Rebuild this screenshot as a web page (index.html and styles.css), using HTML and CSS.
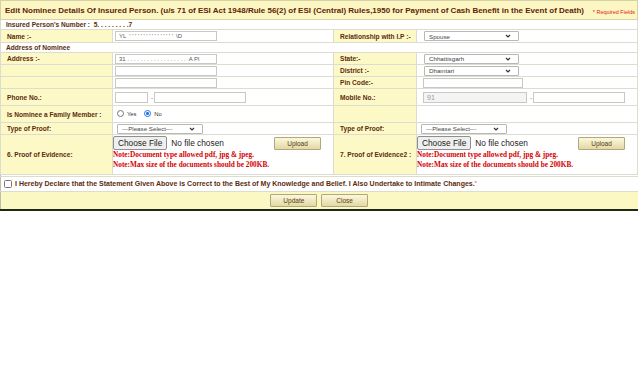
FILE: index.html
```html
<!DOCTYPE html>
<html lang="en">
<head>
    <meta charset="UTF-8">
    <title>Edit Nominee Details</title>
    <link rel="stylesheet" href="styles.css">
</head>
<body>
    <table class="form-table">
        <colgroup>
            <col class="c-lbl1">
            <col class="c-fld1">
            <col class="c-lbl2">
            <col class="c-fld2">
        </colgroup>
        <tr class="head">
            <td colspan="4">
                <div class="head-in">
                    <span class="title">Edit Nominee Details Of Insured Person. (u/s 71 of ESI Act 1948/Rule 56(2) of ESI (Central) Rules,1950 for Payment of Cash Benefit in the Event of Death)</span>
                    <span class="req">* Required Fields</span>
                </div>
            </td>
        </tr>
        <tr class="plain">
            <td colspan="4">Insured Person's Number : &nbsp;5. . . . . . . . .7</td>
        </tr>
        <tr class="name-row">
            <td class="lbl">Name :-</td>
            <td><input class="txt" type="text" value="YL  ' ' ' ' ' ' ' ' ' ' ' ' ' ' ' '  \D"></td>
            <td class="lbl">Relationship with I.P :-</td>
            <td><select class="sel"><option>Spouse</option></select></td>
        </tr>
        <tr class="plain">
            <td colspan="4">Address of Nominee</td>
        </tr>
        <tr>
            <td class="lbl">Address :-</td>
            <td><input class="txt" type="text" value="31 . . . . . . . . . . . . . . . . . .  A Pl"></td>
            <td class="lbl">State:-</td>
            <td><select class="sel"><option>Chhattisgarh</option></select></td>
        </tr>
        <tr>
            <td class="lbl"></td>
            <td><input class="txt" type="text"></td>
            <td class="lbl">District :-</td>
            <td><select class="sel"><option>Dhamtari</option></select></td>
        </tr>
        <tr>
            <td class="lbl"></td>
            <td><input class="txt" type="text"></td>
            <td class="lbl">Pin Code:-</td>
            <td><input class="txt pin" type="text"></td>
        </tr>
        <tr class="tall">
            <td class="lbl">Phone No.:</td>
            <td>
                <div class="phone">
                    <input class="txt std" type="text">
                    <span>-</span>
                    <input class="txt num" type="text">
                </div>
            </td>
            <td class="lbl">Mobile No.:</td>
            <td>
                <div class="phone">
                    <input class="txt code" type="text" value="91" disabled>
                    <span>-</span>
                    <input class="txt num" type="text">
                </div>
            </td>
        </tr>
        <tr class="tall">
            <td class="lbl">Is Nominee a Family Member :</td>
            <td>
                <label class="radio"><span class="dot"></span>Yes</label>
                <label class="radio"><span class="dot on"></span>No</label>
            </td>
            <td class="lbl"></td>
            <td></td>
        </tr>
        <tr>
            <td class="lbl">Type of Proof:</td>
            <td><select class="sel short"><option>---Please Select---</option></select></td>
            <td class="lbl">Type of Proof:</td>
            <td><select class="sel short"><option>---Please Select---</option></select></td>
        </tr>
        <tr class="proof">
            <td class="lbl">6. Proof of Evidence:</td>
            <td>
                <div class="file-row">
                    <span class="file-btn">Choose File</span>
                    <span class="file-name">No file chosen</span>
                    <button class="btn upload">Upload</button>
                </div>
                <p class="note">Note:Document type allowed pdf, jpg &amp; jpeg.</p>
                <p class="note">Note:Max size of the documents should be 200KB.</p>
            </td>
            <td class="lbl">7. Proof of Evidence2 :</td>
            <td>
                <div class="file-row">
                    <span class="file-btn">Choose File</span>
                    <span class="file-name">No file chosen</span>
                    <button class="btn upload">Upload</button>
                </div>
                <p class="note">Note:Document type allowed pdf, jpg &amp; jpeg.</p>
                <p class="note">Note:Max size of the documents should be 200KB.</p>
            </td>
        </tr>
        <tr class="gap"><td colspan="4"></td></tr>
        <tr class="declare">
            <td colspan="4"><span class="check"></span>I Hereby Declare that the Statement Given Above is Correct to the Best of My Knowledge and Belief. I Also Undertake to Intimate Changes.<span class="star">*</span></td>
        </tr>
        <tr class="actions">
            <td colspan="4">
                <button class="btn">Update</button>
                <button class="btn">Close</button>
            </td>
        </tr>
    </table>
</body>
</html>
```

FILE: styles.css
```css
body {
    margin: 0;
    background: #fff;
    font-family: "Liberation Sans", Arial, sans-serif;
    color: #5a2c0e;
}

.form-table {
    width: 638px;
    border-collapse: collapse;
    table-layout: fixed;
    border-left: 1px solid #bdbdb0;
    border-bottom: 2px solid #1e2a14;
    font-size: 6.6px;
    font-weight: bold;
}

.c-lbl1 { width: 112px; }
.c-fld1 { width: 221px; }
.c-lbl2 { width: 83px; }

.form-table td {
    border: 1px solid #dcdccf;
    padding: 0 0 0 4px;
    height: 11px;
    vertical-align: middle;
}

.form-table td.lbl {
    background: #fdf9c7;
    padding-left: 6px;
}

.head td {
    background: #fcf6c2;
    height: 18px;
    border-color: #d6d2a8;
}

.head-in {
    display: flex;
    align-items: center;
    justify-content: space-between;
}

.title {
    font-size: 8px;
    color: #5e2407;
}

.req {
    color: #e02020;
    font-size: 5.5px;
    font-weight: normal;
    padding-right: 2px;
    padding-top: 3px;
}

.plain td {
    padding-left: 5px;
    height: 9px;
}

.name-row td {
    height: 12px;
}

.txt {
    box-sizing: border-box;
    width: 102px;
    height: 10px;
    border: 1px solid #c8c8c8;
    padding: 0 3px;
    font-family: inherit;
    font-size: 6px;
    color: #555;
    margin: 0 0 0 -2px;
    vertical-align: middle;
}

.txt.pin {
    width: 100px;
    margin-left: 2px;
}

.sel {
    box-sizing: border-box;
    appearance: none;
    width: 95px;
    height: 10px;
    border: 1px solid #b8b8b8;
    border-radius: 1px;
    padding: 0 0 0 4px;
    font-family: inherit;
    font-size: 6.2px;
    color: #444;
    background: #fff url("data:image/svg+xml;utf8,<svg xmlns='http://www.w3.org/2000/svg' width='6' height='4'><path d='M1 1l2 2 2-2' fill='none' stroke='%23333' stroke-width='1.2'/></svg>") no-repeat right 7px center;
    vertical-align: middle;
    margin-left: 3px;
}

.sel.short {
    width: 86px;
    margin-left: 0;
}

.tall td {
    height: 16px;
}

.phone {
    display: flex;
    align-items: center;
    gap: 3px;
}

.phone .txt {
    height: 11px;
}

.phone span {
    font-weight: normal;
    color: #888;
}

.txt.std { width: 33px; }
.txt.num { width: 92px; }
.txt.code {
    width: 104px;
    margin-left: 2px;
    background: #f4f4f4;
    color: #999;
    font-size: 7px;
}

.radio {
    display: inline-flex;
    align-items: center;
    gap: 3px;
    font-size: 5.8px;
    font-weight: normal;
    color: #333;
    margin-right: 6px;
}

.dot {
    box-sizing: border-box;
    width: 7px;
    height: 7px;
    border: 1px solid #777;
    border-radius: 50%;
    background: #fff;
}

.dot.on {
    border: 1.5px solid #1a73e8;
    background: radial-gradient(circle, #1a73e8 1.3px, #fff 1.6px);
}

.proof td {
    height: 38px;
    vertical-align: top;
    padding-top: 1px;
}

.proof td.lbl {
    vertical-align: middle;
    padding-top: 0;
}

.file-row {
    display: flex;
    align-items: center;
    font-weight: normal;
}

.file-btn {
    box-sizing: border-box;
    height: 14px;
    line-height: 12px;
    padding: 0 4px;
    border: 1px solid #8f8f8f;
    border-radius: 2px;
    background: #efefef;
    color: #222;
    font-size: 8.3px;
    margin-left: -4px;
}

.file-name {
    color: #222;
    font-size: 8.3px;
    margin-left: 4px;
}

.btn {
    box-sizing: border-box;
    height: 13px;
    border: 1px solid #b3a77a;
    border-radius: 1px;
    background: linear-gradient(#fcf8dc, #e2d9a6);
    color: #5a3a10;
    font-family: "Liberation Sans", Arial, sans-serif;
    font-size: 6.5px;
    padding: 0;
    width: 47px;
}

.upload {
    margin-left: auto;
    margin-right: 12px;
}

.note {
    margin: 0;
    font-family: "Liberation Serif", "Times New Roman", serif;
    font-size: 7.3px;
    color: #d40000;
    line-height: 10px;
    margin-left: -4px;
}

.gap td {
    height: 1px;
    padding: 0;
    border-left: 0;
    border-right: 0;
}

.declare td {
    height: 14px;
    padding-left: 3px;
    border-left: 0;
    border-right: 0;
    font-size: 7px;
}

.check {
    display: inline-block;
    box-sizing: border-box;
    width: 8px;
    height: 8px;
    border: 1px solid #777;
    border-radius: 1.5px;
    margin-right: 3px;
    vertical-align: middle;
}

.star {
    color: #e02020;
    font-size: 5px;
    font-weight: normal;
    vertical-align: top;
}

.actions td {
    background: #fcf8c4;
    height: 17px;
    text-align: center;
    padding: 0;
    border-left: 0;
    border-right: 0;
    border-top: 1px solid #e2e0d0;
}

.actions .btn {
    margin: 0 1px;
}
```
